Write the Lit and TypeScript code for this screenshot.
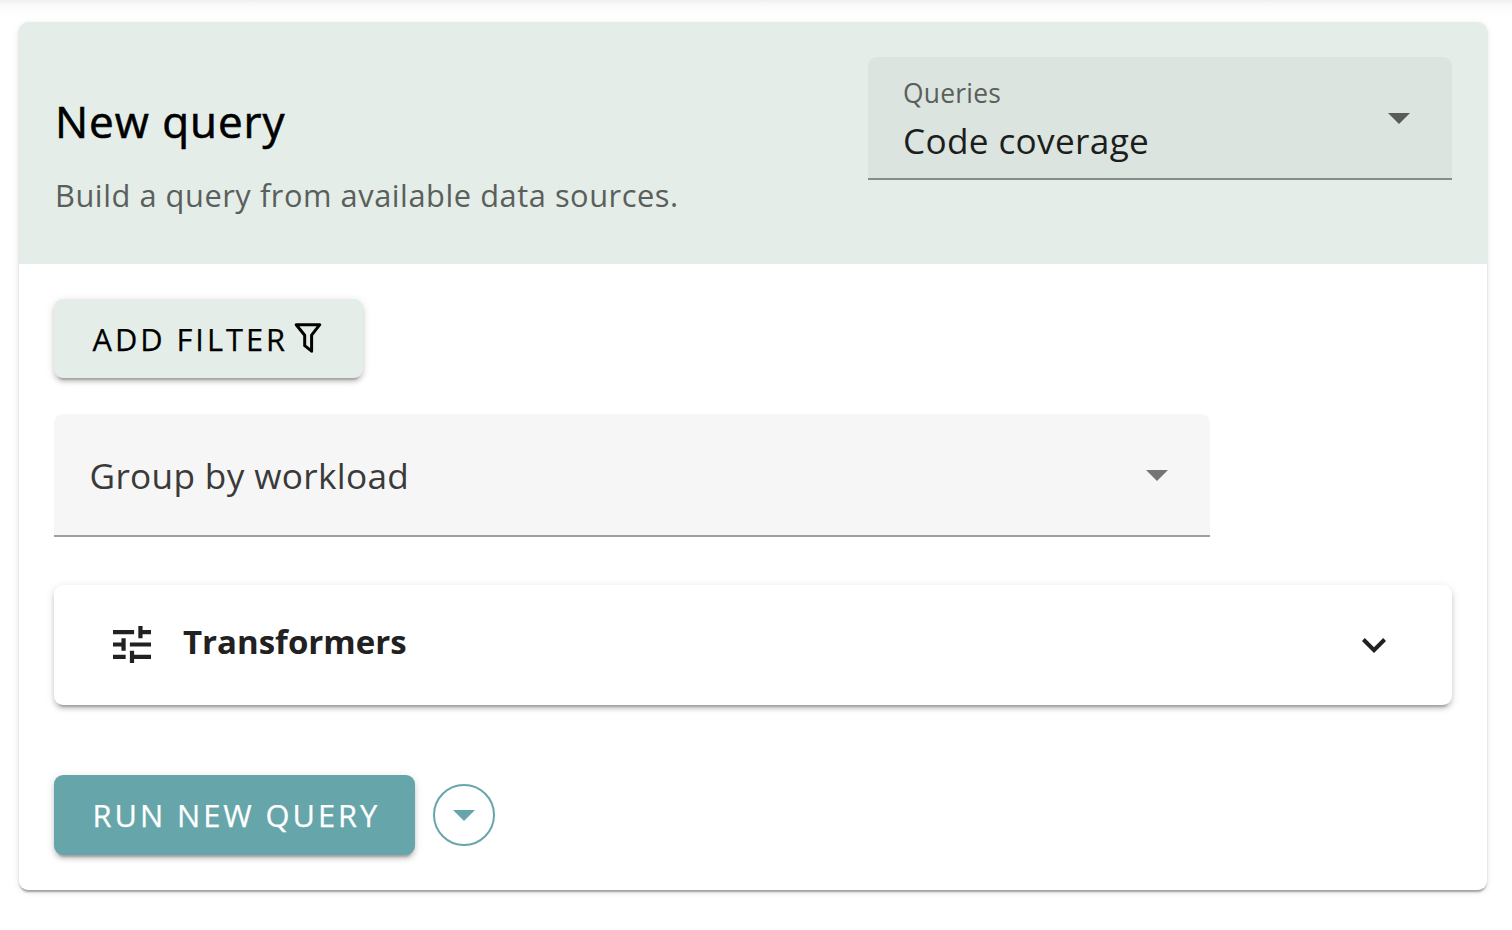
import { LitElement, html, css } from "lit";
import { customElement } from "lit/decorators.js";

@customElement("app-root")
export class AppRoot extends LitElement {
  static styles = css`
    :host {
      display: block;
      height: 930px;
      overflow: hidden;
      background: #fff;
      font-family: "Open Sans", "Noto Sans", sans-serif;
      color: #000;
    }
    * { box-sizing: border-box; }
    svg { display: block; flex: none; }
    button {
      font: inherit;
      border: 0;
      margin: 0;
      cursor: pointer;
    }
    .toolbar-edge {
      height: 22px;
      background: linear-gradient(#efefef, #f8f8f8 4px, #fcfcfc 8px, #fefefe 13px, #fff);
    }
    .raised {
      box-shadow: 0 6px 2px -4px rgba(0, 0, 0, 0.2),
        0 4px 4px 0 rgba(0, 0, 0, 0.14), 0 2px 10px 0 rgba(0, 0, 0, 0.12);
    }
    .card {
      margin: 0 25px 0 19px;
      height: 868px;
      border-radius: 9px;
      background: #fff;
      box-shadow: 0 4px 2px -2px rgba(0, 0, 0, 0.2),
        0 2px 2px 0 rgba(0, 0, 0, 0.14), 0 2px 6px 0 rgba(0, 0, 0, 0.12);
    }
    .header {
      display: flex;
      justify-content: space-between;
      align-items: flex-start;
      height: 242px;
      padding: 35px 35px 0 36px;
      border-radius: 9px 9px 0 0;
      background: #e4ede8;
    }
    .title {
      margin: 34px 0 0;
      font-size: 44px;
      font-weight: 500;
      line-height: 60px;
      letter-spacing: 0.95px;
      -webkit-text-stroke: 0.6px currentColor;
    }
    .subtitle {
      margin: 24px 0 0;
      font-size: 30.8px;
      line-height: 40px;
      letter-spacing: 0.54px;
      color: #5b5f5c;
    }
    .select {
      display: flex;
      align-items: center;
      justify-content: space-between;
      height: 123px;
      border-radius: 9px 9px 0 0;
      border-bottom: 2px solid #868c88;
      background: #dbe4df;
      padding: 2px 42px 0 35px;
      font-size: 35.2px;
      letter-spacing: 0.33px;
    }
    .select.queries { width: 584px; }
    .label {
      margin-top: 1px;
      font-size: 26.4px;
      line-height: 36px;
      letter-spacing: 0.25px;
      color: #5b5f5c;
    }
    .value { line-height: 48px; margin-top: 5px; color: #1c1e1d; }
    .select.group {
      width: 1156px;
      margin-top: 36px;
      background: #f6f6f6;
      border-color: #a0a0a0;
      color: #3a3a3a;
      line-height: 48px;
    }
    .placeholder { margin: 0 0 2px 0.5px; }
    .body {
      display: flex;
      flex-direction: column;
      align-items: flex-start;
      padding: 35px 35px 0;
    }
    .button {
      display: flex;
      align-items: center;
      border-radius: 9px;
      font-size: 30.8px;
      letter-spacing: 2.96px;
      line-height: 42px;
      white-space: nowrap;
      -webkit-text-stroke: 0.25px currentColor;
    }
    .filter {
      width: 309px;
      height: 79px;
      padding: 0 0 0 38.5px;
      font-weight: 500;
      background: #e4ede8;
      color: #000;
    }
    .funnel { margin: -2px 0 0 6.5px; }
    .panel {
      display: flex;
      align-items: center;
      width: 1398px;
      height: 120px;
      margin-top: 48px;
      padding: 0 66px 0 59px;
      border-radius: 9px;
      background: #fff;
      color: #212121;
    }
    .tune { margin-top: -1px; }
    .name {
      flex: 1;
      margin: -6px 0 0 32px;
      font-size: 33px;
      font-weight: 700;
      line-height: 46px;
    }
    .actions {
      display: flex;
      align-items: center;
      gap: 18px;
      margin-top: 70px;
    }
    .run {
      width: 361px;
      height: 80px;
      padding: 0 0 0 38.5px;
      background: #66a6aa;
      color: #fff;
    }
    .more {
      display: flex;
      align-items: center;
      justify-content: center;
      width: 62px;
      height: 62px;
      padding: 0;
      border: 2px solid #66a6aa;
      border-radius: 50%;
      background: #fff;
    }
  `;

  private caret(color: string) {
    return html`<svg width="22" height="11" viewBox="0 0 22 11">
      <path d="M0 0H22L11 11Z" fill=${color}></path>
    </svg>`;
  }

  render() {
    return html`
      <div class="toolbar-edge"></div>
      <main class="card">
        <header class="header">
          <div>
            <h1 class="title">New query</h1>
            <p class="subtitle">Build a query from available data sources.</p>
          </div>
          <div class="select queries" role="combobox">
            <div>
              <div class="label">Queries</div>
              <div class="value">Code coverage</div>
            </div>
            ${this.caret("#575c59")}
          </div>
        </header>
        <section class="body">
          <button class="button filter raised">
            <span>ADD FILTER</span>
            <svg class="funnel" width="28" height="32" viewBox="0 0 28 32">
              <path
                d="M2.2 2.7H25.8L17.6 13.2V29.2L10.7 23.7V13.2Z"
                fill="none" stroke="#000" stroke-width="3" stroke-linejoin="round"
              ></path>
            </svg>
          </button>
          <div class="select group" role="combobox">
            <span class="placeholder">Group by workload</span>
            ${this.caret("#757575")}
          </div>
          <div class="panel raised">
            <svg class="tune" width="38" height="37" viewBox="3 3 18 18" preserveAspectRatio="none">
              <path
                fill="#212121"
                d="M3 17v2h6v-2H3zM3 5v2h10V5H3zm10 16v-2h8v-2h-8v-2h-2v6h2zM7 9v2H3v2h4v2h2V9H7zm14 4v-2H11v2h10zm-6-4h2V7h4V5h-4V3h-2v6z"
              ></path>
            </svg>
            <span class="name">Transformers</span>
            <svg width="24" height="15" viewBox="6 8.59 12 7.41">
              <path fill="#212121" d="M7.41 8.59L12 13.17l4.59-4.58L18 10l-6 6-6-6z"></path>
            </svg>
          </div>
          <div class="actions">
            <button class="button run raised">RUN NEW QUERY</button>
            <button class="more" aria-label="More options">${this.caret("#66a6aa")}</button>
          </div>
        </section>
      </main>
    `;
  }
}
